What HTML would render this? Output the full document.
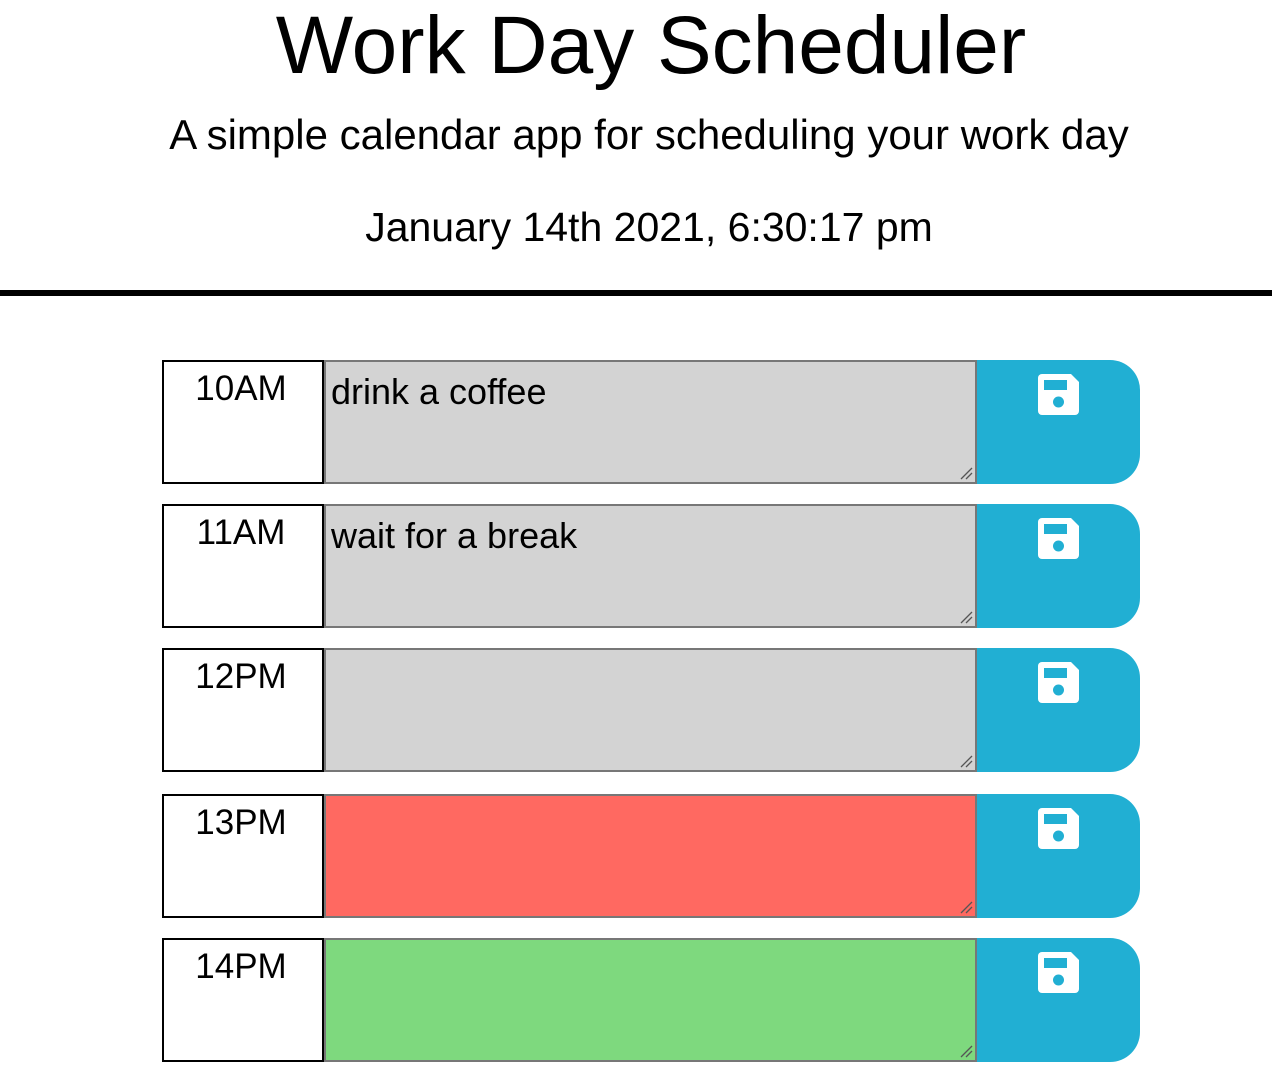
<!DOCTYPE html>
<html><head><meta charset="utf-8"><style>
body{margin:0;width:1272px;height:1066px;background:#fff;font-family:"Liberation Sans",sans-serif;color:#000;position:relative;overflow:hidden}
.t{position:absolute;left:0;width:1302px;text-align:center;white-space:nowrap}
.hr{position:absolute;left:0;width:1272px;top:290px;height:6px;background:#000}
.h{position:absolute;left:162px;width:158px;height:120px;border:2px solid #000;font-size:35px;text-align:center;box-sizing:content-box}
.h span{position:absolute;top:7px;left:-4px;width:162px;text-align:center}
.ta{position:absolute;left:324px;width:649px;height:120px;border:2px solid #777;font-size:36px}
.ta span{position:absolute;left:5px;top:9px}
.b{position:absolute;left:977px;width:163px;height:124px;background:#21afd3;border-radius:0 30px 30px 0}
.b svg{position:absolute;left:61px;top:14px}
.g{position:absolute;right:2px;bottom:2px}
</style></head><body>
<div class="t" style="top:-1px;font-size:82px">Work Day Scheduler</div>
<div class="t" style="top:111px;font-size:42px;left:-2px">A simple calendar app for scheduling your work day</div>
<div class="t" style="top:204px;font-size:41px;left:-2px">January 14th 2021, 6:30:17 pm</div>
<div class="hr"></div>

<div class="h" style="top:360px"><span>10AM</span></div>
<div class="ta" style="top:360px;background:#d3d3d3"><span>drink a coffee</span><svg class="g" width="14" height="14"><path d="M2 13L13 2M7 13L13 7" stroke="#555" stroke-width="1.3"/></svg></div>
<div class="b" style="top:360px"><svg width="41" height="41" viewBox="0 0 41 41"><path d="M4 0H33L41 8V37A4 4 0 0 1 37 41H4A4 4 0 0 1 0 37V4A4 4 0 0 1 4 0Z" fill="#fff"/><rect x="6" y="6" width="23" height="10" fill="#21afd3"/><circle cx="20.5" cy="28" r="5.5" fill="#21afd3"/></svg></div>

<div class="h" style="top:504px"><span>11AM</span></div>
<div class="ta" style="top:504px;background:#d3d3d3"><span>wait for a break</span><svg class="g" width="14" height="14"><path d="M2 13L13 2M7 13L13 7" stroke="#555" stroke-width="1.3"/></svg></div>
<div class="b" style="top:504px"><svg width="41" height="41" viewBox="0 0 41 41"><path d="M4 0H33L41 8V37A4 4 0 0 1 37 41H4A4 4 0 0 1 0 37V4A4 4 0 0 1 4 0Z" fill="#fff"/><rect x="6" y="6" width="23" height="10" fill="#21afd3"/><circle cx="20.5" cy="28" r="5.5" fill="#21afd3"/></svg></div>

<div class="h" style="top:648px"><span>12PM</span></div>
<div class="ta" style="top:648px;background:#d3d3d3"><svg class="g" width="14" height="14"><path d="M2 13L13 2M7 13L13 7" stroke="#555" stroke-width="1.3"/></svg></div>
<div class="b" style="top:648px"><svg width="41" height="41" viewBox="0 0 41 41"><path d="M4 0H33L41 8V37A4 4 0 0 1 37 41H4A4 4 0 0 1 0 37V4A4 4 0 0 1 4 0Z" fill="#fff"/><rect x="6" y="6" width="23" height="10" fill="#21afd3"/><circle cx="20.5" cy="28" r="5.5" fill="#21afd3"/></svg></div>

<div class="h" style="top:794px"><span>13PM</span></div>
<div class="ta" style="top:794px;background:#ff6961"><svg class="g" width="14" height="14"><path d="M2 13L13 2M7 13L13 7" stroke="#555" stroke-width="1.3"/></svg></div>
<div class="b" style="top:794px"><svg width="41" height="41" viewBox="0 0 41 41"><path d="M4 0H33L41 8V37A4 4 0 0 1 37 41H4A4 4 0 0 1 0 37V4A4 4 0 0 1 4 0Z" fill="#fff"/><rect x="6" y="6" width="23" height="10" fill="#21afd3"/><circle cx="20.5" cy="28" r="5.5" fill="#21afd3"/></svg></div>

<div class="h" style="top:938px"><span>14PM</span></div>
<div class="ta" style="top:938px;background:#7ed97e"><svg class="g" width="14" height="14"><path d="M2 13L13 2M7 13L13 7" stroke="#555" stroke-width="1.3"/></svg></div>
<div class="b" style="top:938px"><svg width="41" height="41" viewBox="0 0 41 41"><path d="M4 0H33L41 8V37A4 4 0 0 1 37 41H4A4 4 0 0 1 0 37V4A4 4 0 0 1 4 0Z" fill="#fff"/><rect x="6" y="6" width="23" height="10" fill="#21afd3"/><circle cx="20.5" cy="28" r="5.5" fill="#21afd3"/></svg></div>
</body></html>
